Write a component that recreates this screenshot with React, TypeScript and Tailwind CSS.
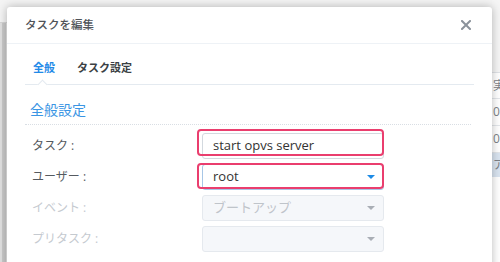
import React from "react";

function Caret({ color }: { color: string }) {
  return (
    <span
      className="block w-0 h-0 border-l-[4px] border-r-[4px] border-t-[4px] border-l-transparent border-r-transparent"
      style={{ borderTopColor: color }}
    />
  );
}

function Row({
  label,
  disabled,
  children,
}: {
  label: string;
  disabled?: boolean;
  children: React.ReactNode;
}) {
  return (
    <div className="flex items-center h-[26px]">
      <div
        className={`w-[177px] pl-[7px] text-[12px] ${
          disabled ? "text-[#c5cad0]" : "text-[#555a60]"
        }`}
      >
        {label}
      </div>
      {children}
    </div>
  );
}

export default function App() {
  return (
    <div className="relative w-[500px] h-[262px] overflow-hidden bg-white font-['Open_Sans','Noto_Sans_CJK_JP',sans-serif]">
      {/* background application */}
      <div className="flex w-full h-full">
        <div className="w-[7px] h-full flex flex-col bg-[#f4f4f4]">
          <div className="h-[23px] border-b border-[#d6d6d6]" />
          <div className="flex-1 flex">
            <div className="w-[2px] bg-[#e0e0e0]" />
            <div className="w-[4px] bg-[#c9c9c9]" />
            <div className="w-[1px] bg-[#e6e6e6]" />
          </div>
        </div>
        <div className="flex-1 bg-[#f4f4f4]" />
        <div className="w-[8px] h-full flex flex-col overflow-hidden text-[12px] text-[#7d8288] leading-none whitespace-nowrap">
          <div className="h-[73px] bg-[#f5f5f5] border-b border-[#dfe2e6]" />
          <div className="h-[26px] bg-white border-b border-[#e3e6ea] flex items-center pl-[1px]">実行</div>
          <div className="h-[27px] bg-white border-b border-[#e3e6ea] flex items-center pl-[1px]">03</div>
          <div className="h-[27px] bg-white border-b border-[#e3e6ea] flex items-center pl-[1px]">03</div>
          <div className="h-[24px] bg-[#d9e4f0] flex items-center pl-[1px]">アク</div>
          <div className="flex-1 bg-white" />
        </div>
      </div>

      {/* dialog */}
      <div className="absolute left-[7px] top-[7px] w-[485px] h-[280px] bg-white rounded-[3px] shadow-[0_0_10px_rgba(0,0,0,0.28)] flex flex-col">
        <div className="h-[37px] flex items-center justify-between pl-[18px] pr-[21px] border-b border-[#eef2f6]">
          <span className="text-[11.5px] text-[#4f5358] font-medium">タスクを編集</span>
          <svg width="10" height="10" viewBox="0 0 10 10">
            <path d="M1 1 L9 9 M9 1 L1 9" stroke="#8b929b" strokeWidth="2" strokeLinecap="square" />
          </svg>
        </div>

        <div className="mx-[18px] h-[41px] border-b border-[#e4eaf0] flex items-end relative">
          <span className="ml-[8px] mb-[8px] text-[11px] leading-[16px] font-bold text-[#1f8ae8]">全般</span>
          <span className="ml-[22px] mb-[8px] text-[11px] leading-[16px] font-bold text-[#3b3f44]">タスク設定</span>
          <span className="absolute left-[14px] -bottom-[4px] w-[7px] h-[7px] rotate-45 bg-white border-l border-t border-[#e4eaf0]" />
        </div>

        <div className="ml-[18px] mr-[21px] pt-[12px] pb-[3px] border-b border-dotted border-[#d9dee4]">
          <span className="ml-[5px] text-[14px] leading-[20px] text-[#3a95e4]">全般設定</span>
        </div>

        <div className="ml-[18px] mt-[8px] flex flex-col gap-[5px]">
          <Row label="タスク :">
            <div className="relative">
              <div className="w-[182px] h-[26px] rounded-[3px] border border-[#d3d9df] bg-white flex items-center pl-[10px] text-[13px] text-[#333]">
                start opvs server
              </div>
              <div className="absolute -left-[5px] -top-[4px] w-[187px] h-[27px] rounded-[4px] border-2 border-[#ea3e6e]" />
            </div>
          </Row>
          <Row label="ユーザー :">
            <div className="relative">
              <div className="w-[182px] h-[26px] rounded-[3px] border border-[#a7c6e6] bg-white flex items-center justify-between pl-[10px] pr-[8px] text-[13px] text-[#333]">
                <span>root</span>
                <Caret color="#1d8be6" />
              </div>
              <div className="absolute -left-[5px] -top-[1px] w-[187px] h-[26px] rounded-[4px] border-2 border-[#ea3e6e]" />
            </div>
          </Row>
          <Row label="イベント :" disabled>
            <div className="w-[182px] h-[26px] rounded-[3px] border border-[#e5e9ee] bg-[#f5f7fa] flex items-center justify-between pl-[10px] pr-[8px] text-[13px] text-[#bfc4ca]">
              <span>ブートアップ</span>
              <Caret color="#a9aeb5" />
            </div>
          </Row>
          <Row label="プリタスク :" disabled>
            <div className="w-[182px] h-[26px] rounded-[3px] border border-[#e5e9ee] bg-[#f5f7fa] flex items-center justify-end pr-[8px]">
              <Caret color="#a9aeb5" />
            </div>
          </Row>
        </div>
      </div>
    </div>
  );
}
